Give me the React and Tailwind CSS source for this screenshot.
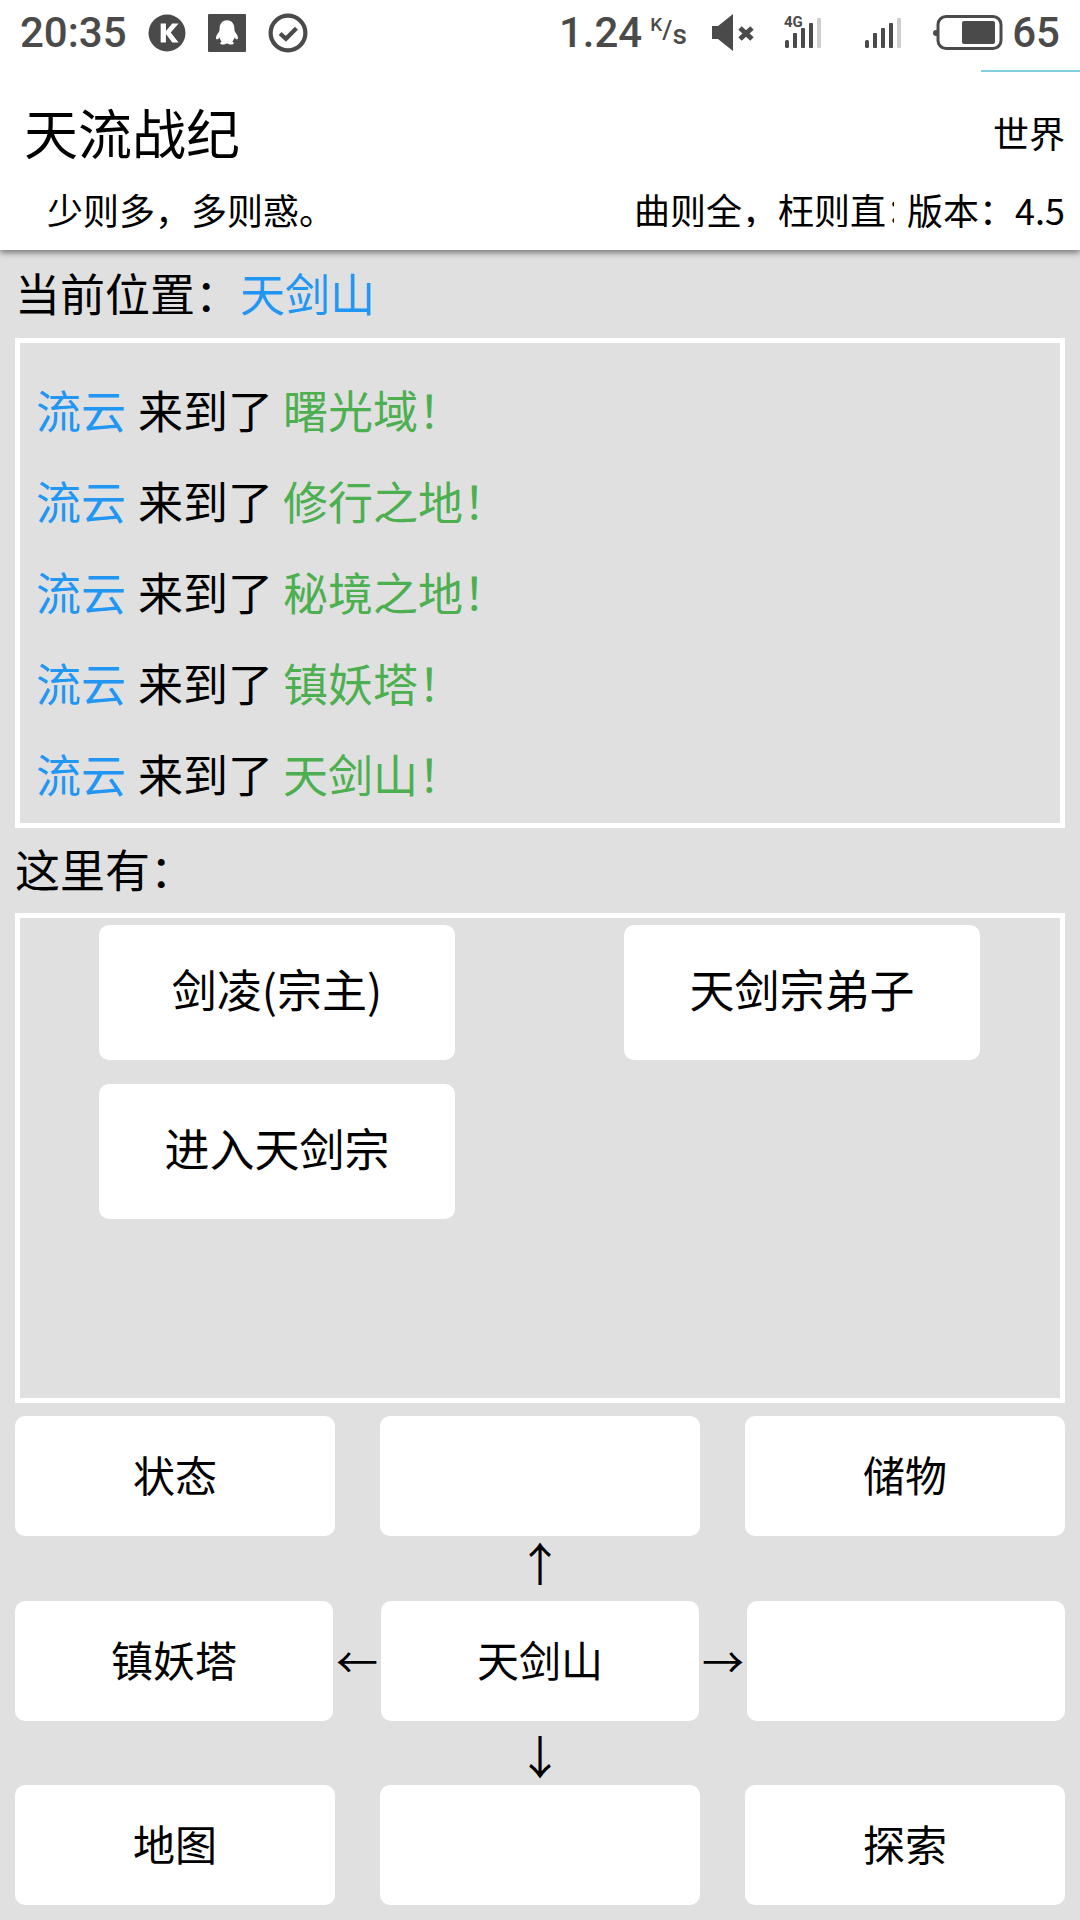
const cjk = "font-['Noto_Sans_CJK_SC',sans-serif]";

const logs = ["曙光域", "修行之地", "秘境之地", "镇妖塔", "天剑山"];

const StatusIcons = () => (
  <div className="flex items-center">
    <svg width="38" height="38" viewBox="0 0 36 36" className="ml-[21px]">
      <circle cx="18" cy="18" r="17.5" fill="#4a4a4a" />
      <path d="M12 9h5v7l6-7h6l-7.5 8.5L29 27h-6l-6-8v8h-5z" fill="#fff" />
    </svg>
    <svg width="38" height="38" viewBox="0 0 36 36" className="ml-[22px]">
      <rect width="36" height="36" rx="1" fill="#4a4a4a" />
      <path d="M18 6c-5 0-7 4-7 8 0 2-.5 3-2 5-1.500 2-2 5-.5 5 1 0 2-1 2.500-2 .3 2 1 3 2 4-2 1-2 3 1 3 2 0 3-1 4-1s2 1 4 1c3 0 3-2 1-3 1-1 1.700-2 2-4 .5 1 1.500 2 2.500 2 1.500 0 1-3-.5-5-1.500-2-2-3-2-5 0-4-2-8-7-8z" fill="#fff" />
    </svg>
    <svg width="40" height="40" viewBox="0 0 38 38" className="ml-[22px]">
      <circle cx="19" cy="19" r="16.500" fill="none" stroke="#4a4a4a" strokeWidth="4" />
      <path d="M11.500 19.500l5.500 5 10-10" fill="none" stroke="#4a4a4a" strokeWidth="4" />
    </svg>
  </div>
);

const Bars = ({ lte }) => (
  <svg width="38" height="34" viewBox="0 0 38 34" className="-mt-[4px]">
    {lte && (
      <text x="0" y="13" fontSize="15" fontWeight="700" fill="#4a4a4a" fontFamily="Roboto, sans-serif">
        4G
      </text>
    )}
    <rect x="1" y="26" width="4" height="8" rx="1.500" fill="#4a4a4a" />
    <rect x="9" y="19" width="4" height="15" rx="1" fill="#4a4a4a" />
    <rect x="17" y="14" width="4" height="20" rx="1" fill="#4a4a4a" />
    <rect x="25" y="9" width="4" height="25" rx="1" fill="#4a4a4a" />
    <rect x="33" y="4" width="4" height="30" rx="1" fill="#cfcfcf" />
  </svg>
);

const StatusBar = () => (
  <div className="relative z-10 h-[72px] flex items-center bg-white pl-[20px] pr-[20px] pb-[6px] text-[#4a4a4a] font-['Roboto',sans-serif] font-medium text-[42px]">
    <span className="leading-none">20:35</span>
    <StatusIcons />
    <div className="ml-auto flex items-center">
      <span className="leading-none">1.24</span>
      <span className="ml-[8px] w-[36px] flex items-start leading-none">
        <span className="text-[19px] -mt-[2px]">K</span>
        <span className="text-[26px]">/</span>
        <span className="text-[28px] mt-[4px]">s</span>
      </span>
      <svg width="44" height="38" viewBox="0 0 44 38" className="ml-[26px]">
        <path d="M0 12h6L21 0v37L6 25H0z" fill="#4a4a4a" />
        <path d="M28 14l12 11M40 14L28 25" stroke="#4a4a4a" strokeWidth="5" />
      </svg>
      <div className="ml-[28px]"><Bars lte /></div>
      <div className="ml-[42px]"><Bars /></div>
      <svg width="70" height="36" viewBox="0 0 70 36" className="ml-[31px]">
        <circle cx="3" cy="18" r="3" fill="#4a4a4a" />
        <rect x="5" y="1.500" width="63" height="32" rx="8" fill="none" stroke="#4a4a4a" strokeWidth="3" />
        <rect x="29" y="6" width="33" height="23" rx="2" fill="#4a4a4a" />
      </svg>
      <span className="ml-[9px] leading-none">65</span>
    </div>
    <div className="absolute right-0 bottom-0 w-[99px] h-[2px] bg-[#7fd0dc]" />
  </div>
);

const Header = () => (
  <div className={`bg-white h-[178px] text-black shadow-[0_3px_6px_rgba(0,0,0,0.45)] relative ${cjk}`}>
    <div className="flex items-center justify-between pl-[24px] pr-[15px] pt-[24px] h-[96px]">
      <span className="text-[54px] leading-none">天流战纪</span>
      <span className="text-[36px] leading-none">世界</span>
    </div>
    <div className="flex items-center pl-[47px] pr-[15px] mt-[23px] text-[36px] leading-none">
      <span>少则多，多则惑。</span>
      <span className="ml-auto w-[260px] overflow-hidden whitespace-nowrap">曲则全，枉则直；</span>
      <span className="ml-[13px]">版本：4.5</span>
    </div>
  </div>
);

const NavButton = ({ children, className = "" }) => (
  <div className={`h-[120px] rounded-[10px] bg-white flex items-center justify-center pb-[6px] text-[42px] ${className}`}>
    {children}
  </div>
);

const PanelButton = ({ children }) => (
  <div className="h-[135px] rounded-[10px] bg-white flex items-center justify-center pb-[8px]">{children}</div>
);

export default function App() {
  return (
    <div className={`w-[1080px] h-[1920px] overflow-hidden bg-[#e0e0e0] text-black ${cjk}`}>
      <StatusBar />
      <Header />

      <div className="px-[15px]">
        <div className="h-[88px] flex items-center pb-[4px] text-[45px] leading-none">
          当前位置：<span className="text-[#2196f3]">天剑山</span>
        </div>

        <div className="h-[490px] border-[5px] border-white pl-[16px] pt-[21px] text-[45px]">
          {logs.map((place) => (
            <div key={place} className="h-[91px] flex items-center leading-none">
              <span className="text-[#2196f3]">流云</span>
              <span className="ml-[12px]">来到了</span>
              <span className="ml-[10px] text-[#4caf50]">{place}！</span>
            </div>
          ))}
        </div>

        <div className="h-[85px] flex items-center pb-[4px] text-[45px] leading-none">这里有：</div>

        <div className="h-[490px] border-[5px] border-white pt-[7px] pl-[79px] pr-[80px] grid grid-cols-[356px_356px] justify-between content-start gap-y-[24px] text-[45px]">
          <PanelButton>剑凌(宗主)</PanelButton>
          <PanelButton>天剑宗弟子</PanelButton>
          <PanelButton>进入天剑宗</PanelButton>
        </div>

        <div className="mt-[13px] flex flex-col">
          <div className="flex justify-between">
            <NavButton className="w-[320px]">状态</NavButton>
            <NavButton className="w-[320px]" />
            <NavButton className="w-[320px]">储物</NavButton>
          </div>
          <div className="h-[65px] flex items-center justify-center pb-[16px] text-[46px] leading-none">↑</div>
          <div className="flex items-center justify-between">
            <NavButton className="w-[318px]">镇妖塔</NavButton>
            <span className="text-[42px] leading-none pb-[2px]">←</span>
            <NavButton className="w-[318px]">天剑山</NavButton>
            <span className="text-[42px] leading-none pb-[2px]">→</span>
            <NavButton className="w-[318px]" />
          </div>
          <div className="h-[64px] flex items-center justify-center pt-[2px] text-[46px] leading-none">↓</div>
          <div className="flex justify-between">
            <NavButton className="w-[320px]">地图</NavButton>
            <NavButton className="w-[320px]" />
            <NavButton className="w-[320px]">探索</NavButton>
          </div>
        </div>
      </div>
    </div>
  );
}
